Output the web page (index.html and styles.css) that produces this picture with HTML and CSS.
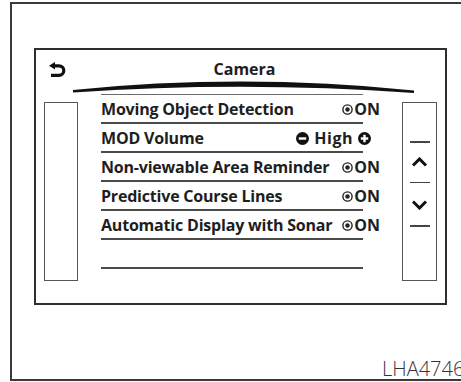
FILE: index.html
```html
<!DOCTYPE html>
<html lang="en">
<head>
    <meta charset="UTF-8">
    <meta name="viewport" content="width=device-width, initial-scale=1.0">
    <title>Camera</title>
    <link rel="stylesheet" href="styles.css">
</head>
<body>

    <div class="page">
        <div class="screen">
            <div class="header">
                <svg class="back" width="17" height="15" viewBox="0 0 17 15">
                    <path d="M0 3.8 L6 0 L6 7.6 Z" fill="#111"/>
                    <path d="M4.5 3.8 H10 A4.8 4.8 0 0 1 10 13.4 H2" fill="none" stroke="#111" stroke-width="3.2"/>
                </svg>
                <div class="title">Camera</div>
            </div>

            <svg class="arc" width="341" height="14" viewBox="0 0 341 14">
                <path d="M0 10 Q170 -7 341 10.5 L341 13 Q170 1 0 12.5 Z" fill="#111"/>
            </svg>

            <div class="content">
                <div class="side"></div>

                <div class="list">
                    <div class="row">
                        <span class="label">Moving Object Detection</span>
                        <span class="value"><svg class="radio" width="11" height="11" viewBox="0 0 11 11"><circle cx="5.5" cy="5.5" r="4.6" fill="none" stroke="#222" stroke-width="1.4"/><circle cx="5.5" cy="5.5" r="2.2" fill="#222"/></svg>ON</span>
                    </div>
                    <div class="row">
                        <span class="label">MOD Volume</span>
                        <span class="value volume">
                            <svg class="round" width="13" height="13" viewBox="0 0 13 13"><circle cx="6.5" cy="6.5" r="6.5" fill="#111"/><rect x="2.8" y="5.3" width="7.4" height="2.4" fill="#fff"/></svg>
                            <span class="level">High</span>
                            <svg class="round" width="13" height="13" viewBox="0 0 13 13"><circle cx="6.5" cy="6.5" r="6.5" fill="#111"/><rect x="2.8" y="5.3" width="7.4" height="2.4" fill="#fff"/><rect x="5.3" y="2.8" width="2.4" height="7.4" fill="#fff"/></svg>
                        </span>
                    </div>
                    <div class="row">
                        <span class="label">Non-viewable Area Reminder</span>
                        <span class="value"><svg class="radio" width="11" height="11" viewBox="0 0 11 11"><circle cx="5.5" cy="5.5" r="4.6" fill="none" stroke="#222" stroke-width="1.4"/><circle cx="5.5" cy="5.5" r="2.2" fill="#222"/></svg>ON</span>
                    </div>
                    <div class="row">
                        <span class="label">Predictive Course Lines</span>
                        <span class="value"><svg class="radio" width="11" height="11" viewBox="0 0 11 11"><circle cx="5.5" cy="5.5" r="4.6" fill="none" stroke="#222" stroke-width="1.4"/><circle cx="5.5" cy="5.5" r="2.2" fill="#222"/></svg>ON</span>
                    </div>
                    <div class="row">
                        <span class="label">Automatic Display with Sonar</span>
                        <span class="value"><svg class="radio" width="11" height="11" viewBox="0 0 11 11"><circle cx="5.5" cy="5.5" r="4.6" fill="none" stroke="#222" stroke-width="1.4"/><circle cx="5.5" cy="5.5" r="2.2" fill="#222"/></svg>ON</span>
                    </div>
                    <div class="row"></div>
                </div>

                <div class="side scroll">
                    <span class="tick first"></span>
                    <svg class="chevron up" width="17" height="10" viewBox="0 0 17 10">
                        <polyline points="2,8.5 8.5,2 15,8.5" fill="none" stroke="#111" stroke-width="3"/>
                    </svg>
                    <span class="tick"></span>
                    <svg class="chevron down" width="17" height="10" viewBox="0 0 17 10">
                        <polyline points="2,1.5 8.5,8 15,1.5" fill="none" stroke="#111" stroke-width="3"/>
                    </svg>
                    <span class="tick"></span>
                </div>
            </div>
        </div>

        <div class="code">LHA4746</div>
    </div>

</body>
</html>
```

FILE: styles.css
```css
html, body {
    margin: 0;
    padding: 0;
    overflow: hidden;
    background: #fff;
}
body {
    width: 461px;
    height: 382px;
    font-family: "Open Sans", "Liberation Sans", sans-serif;
    color: #1e1e1e;
}
.page {
    box-sizing: border-box;
    width: 470px;
    height: 379px;
    margin: 2px 0 0 10px;
    border: 2px solid #3a3a3a;
    display: flex;
    flex-direction: column;
}
.screen {
    box-sizing: border-box;
    width: 413px;
    height: 257px;
    margin: 44px 0 0 22px;
    border: 2px solid #2e2e2e;
}
.header {
    display: flex;
    align-items: center;
    height: 30px;
    padding-top: 8px;
    box-sizing: border-box;
}
.back {
    margin-left: 13px;
    flex-shrink: 0;
}
.title {
    flex: 1;
    text-align: center;
    padding-right: 22px;
    font-size: 16px;
    font-weight: 700;
    line-height: 22px;
}
.arc {
    display: block;
    margin-left: 37px;
}
.content {
    display: flex;
    align-items: flex-start;
}
.side {
    box-sizing: border-box;
    width: 34px;
    height: 179px;
    margin: 8px 0 0 8px;
    border: 1.5px solid #555;
}
.list {
    width: 262px;
    margin-left: 23px;
    border-top: 1.5px solid #6a6a6a;
}
.row {
    box-sizing: border-box;
    height: 29px;
    border-bottom: 2px solid #4a4a4a;
    display: flex;
    justify-content: space-between;
    align-items: center;
    padding-top: 1px;
    font-size: 16px;
    font-weight: 700;
    line-height: 27px;
}
.label {
    white-space: nowrap;
    letter-spacing: -0.2px;
}
.value {
    display: flex;
    align-items: center;
    margin-right: -17px;
    white-space: nowrap;
}
.radio {
    margin-right: 1px;
}
.volume {
    margin-right: -8px;
    gap: 5px;
}
.level {
    letter-spacing: 0.5px;
}
.round {
    flex-shrink: 0;
}
.scroll {
    width: 35px;
    margin-left: 39px;
    display: flex;
    flex-direction: column;
    align-items: center;
}
.tick {
    display: block;
    width: 20px;
    height: 1.5px;
    background: #444;
    margin-top: 15px;
}
.tick.first {
    margin-top: 38px;
}
.chevron {
    display: block;
}
.chevron.up {
    margin-top: 14px;
}
.chevron.down {
    margin-top: 17px;
}
.code {
    margin-top: auto;
    padding-left: 370px;
    font-size: 20px;
    font-weight: 300;
    line-height: 20px;
    color: #333;
    white-space: nowrap;
}
```
